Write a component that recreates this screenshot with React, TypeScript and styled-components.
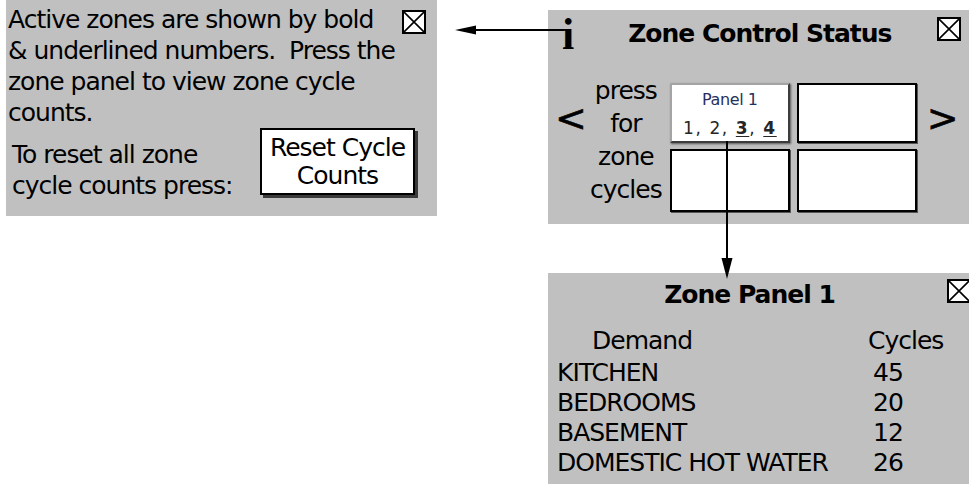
import React from 'react'
import styled, { createGlobalStyle } from 'styled-components'

const PANEL_BG = '#c0c0c0'

const GlobalStyle = createGlobalStyle`
  html, body {
    margin: 0;
    padding: 0;
    background: #fff;
  }
  body {
    font-family: 'DejaVu Sans', Verdana, sans-serif;
    color: #000;
  }
`

const Page = styled.div`
  position: relative;
  width: 969px;
  height: 484px;
  overflow: hidden;
  box-sizing: border-box;
  padding-left: 6px;
  display: grid;
  grid-template-columns: 431px 111px 421px;
  align-items: start;
  font-size: 25px;
  letter-spacing: -1px;
`

const Panel = styled.div`
  position: relative;
  background: ${PANEL_BG};
`

const InfoPanel = styled(Panel)`
  height: 216px;
  padding: 4px 0 0 2px;
  box-sizing: border-box;
`

const InfoText = styled.div`
  line-height: 31px;
  white-space: nowrap;
`

const ResetRow = styled.div`
  display: flex;
  align-items: flex-start;
`

const ResetText = styled.div`
  width: 248px;
  margin: 11px 0 0 4px;
  line-height: 31px;
  white-space: nowrap;
`

const ResetButton = styled.div`
  width: 155px;
  height: 67px;
  box-sizing: border-box;
  border: 2px solid #000;
  background: #fff;
  box-shadow: 3px 3px 0 #3a3a3a;
  display: flex;
  align-items: center;
  justify-content: center;
  text-align: center;
  line-height: 28px;
`

const RightColumn = styled.div`
  grid-column: 3;
  display: flex;
  flex-direction: column;
  gap: 49px;
  padding-top: 10px;
`

const StatusPanel = styled(Panel)`
  height: 214px;
`

const StatusHeader = styled.div`
  display: flex;
  align-items: flex-start;
  padding-left: 14px;
`

const InfoGlyph = styled.div`
  margin-top: 3px;
  font-family: 'Liberation Serif', 'Times New Roman', serif;
  font-weight: 700;
  font-size: 44px;
  line-height: 44px;
  letter-spacing: 0;
`

const PanelTitle = styled.div<{ $offset?: number }>`
  margin-top: 8px;
  margin-left: ${(p) => p.$offset ?? 0}px;
  font-weight: 700;
  line-height: 31px;
  white-space: nowrap;
`

const StatusBody = styled.div`
  display: flex;
  align-items: flex-start;
  padding-left: 7px;
`

const Chevron = styled.div<{ $gap?: number }>`
  margin-top: 42px;
  margin-left: ${(p) => p.$gap ?? 0}px;
  font-size: 38px;
  line-height: 38px;
  letter-spacing: 0;
  -webkit-text-stroke: 0.6px #000;
`

const PressHint = styled.div`
  width: 78px;
  margin-top: 17px;
  text-align: center;
  line-height: 33px;
`

const PanelGrid = styled.div`
  margin: 26px 0 0 5px;
  display: grid;
  grid-template-columns: 120px 120px;
  grid-template-rows: 60px 63px;
  column-gap: 7px;
  row-gap: 6px;
`

const PanelCell = styled.div<{ $active?: boolean }>`
  box-sizing: border-box;
  background: #fff;
  border: 2px solid #000;
  border-color: ${(p) => (p.$active ? '#a4a4a4 #3c3c3c #3c3c3c #a4a4a4' : '#000')};
  box-shadow: ${(p) => (p.$active ? '1px 1px 2px rgba(0,0,0,0.55)' : '1px 1px 0 #555')};
  display: flex;
  flex-direction: column;
  align-items: center;
  padding-top: 4px;
`

const CellName = styled.div`
  font-size: 16px;
  line-height: 22px;
  letter-spacing: -0.4px;
  color: #27305a;
`

const CellZones = styled.div`
  margin-top: 6px;
  font-size: 17px;
  line-height: 22px;
  letter-spacing: 1.6px;
  color: #262626;
  b {
    text-decoration: underline;
    text-underline-offset: 2px;
  }
`

const ZonePanel = styled(Panel)`
  height: 211px;
`

const ZoneTitle = styled.div`
  padding: 6px 18px 0 0;
  text-align: center;
  font-weight: 700;
  line-height: 32px;
`

const CycleTable = styled.div`
  margin-top: 12px;
  padding-left: 9px;
  display: grid;
  grid-template-columns: 311px auto;
  grid-template-rows: 35px;
  grid-auto-rows: 30px;
  align-items: center;
  line-height: 30px;
  white-space: nowrap;
`

const CycleCell = styled.div<{ $indent?: number }>`
  padding-left: ${(p) => p.$indent ?? 0}px;
`

const CloseBox = styled.div<{ $top: number; $right: number }>`
  position: absolute;
  top: ${(p) => p.$top}px;
  right: ${(p) => p.$right}px;
  width: 24px;
  height: 24px;
  box-sizing: border-box;
  border: 2px solid #000;
  background: #fff;
  svg {
    display: block;
    width: 100%;
    height: 100%;
  }
`

const Connectors = styled.svg`
  position: absolute;
  left: 0;
  top: 0;
  width: 969px;
  height: 484px;
  pointer-events: none;
`

const Close = ({ top, right }: { top: number; right: number }) => (
  <CloseBox $top={top} $right={right}>
    <svg viewBox='0 0 20 20'>
      <path d='M0 0L20 20M20 0L0 20' stroke='#000' strokeWidth='1.6' />
    </svg>
  </CloseBox>
)

const cycles = [
  { zone: 'KITCHEN', count: 45 },
  { zone: 'BEDROOMS', count: 20 },
  { zone: 'BASEMENT', count: 12 },
  { zone: 'DOMESTIC HOT WATER', count: 26 },
]

const App = () => (
  <>
    <GlobalStyle />
    <Page>
      <InfoPanel>
        <InfoText>
          Active zones are shown by bold
          <br />
          &amp; underlined numbers.&nbsp; Press the
          <br />
          zone panel to view zone cycle
          <br />
          counts.
        </InfoText>
        <ResetRow>
          <ResetText>
            To reset all zone
            <br />
            cycle counts press:
          </ResetText>
          <ResetButton>
            Reset Cycle
            <br />
            Counts
          </ResetButton>
        </ResetRow>
        <Close top={10} right={11} />
      </InfoPanel>

      <RightColumn>
        <StatusPanel>
          <StatusHeader>
            <InfoGlyph>i</InfoGlyph>
            <PanelTitle $offset={54}>Zone Control Status</PanelTitle>
          </StatusHeader>
          <Close top={7} right={8} />
          <StatusBody>
            <Chevron>&lt;</Chevron>
            <PressHint>
              press
              <br />
              for
              <br />
              zone
              <br />
              cycles
            </PressHint>
            <PanelGrid>
              <PanelCell $active>
                <CellName>Panel 1</CellName>
                <CellZones>
                  1, 2, <b>3</b>, <b>4</b>
                </CellZones>
              </PanelCell>
              <PanelCell />
              <PanelCell />
              <PanelCell />
            </PanelGrid>
            <Chevron $gap={10}>&gt;</Chevron>
          </StatusBody>
        </StatusPanel>

        <ZonePanel>
          <ZoneTitle>Zone Panel 1</ZoneTitle>
          <Close top={6} right={-2} />
          <CycleTable>
            <CycleCell $indent={35}>Demand</CycleCell>
            <CycleCell>Cycles</CycleCell>
            {cycles.map((c) => (
              <React.Fragment key={c.zone}>
                <CycleCell>{c.zone}</CycleCell>
                <CycleCell $indent={5}>{c.count}</CycleCell>
              </React.Fragment>
            ))}
          </CycleTable>
        </ZonePanel>
      </RightColumn>

      <Connectors viewBox='0 0 969 484'>
        <line x1='472' y1='30' x2='564' y2='30' stroke='#000' strokeWidth='2' />
        <path d='M455 30L476 25.5L476 34.5Z' fill='#000' />
        <line x1='727' y1='141' x2='727' y2='262' stroke='#000' strokeWidth='2' />
        <path d='M727 279L721.5 258L732.5 258Z' fill='#000' />
      </Connectors>
    </Page>
  </>
)

export default App
